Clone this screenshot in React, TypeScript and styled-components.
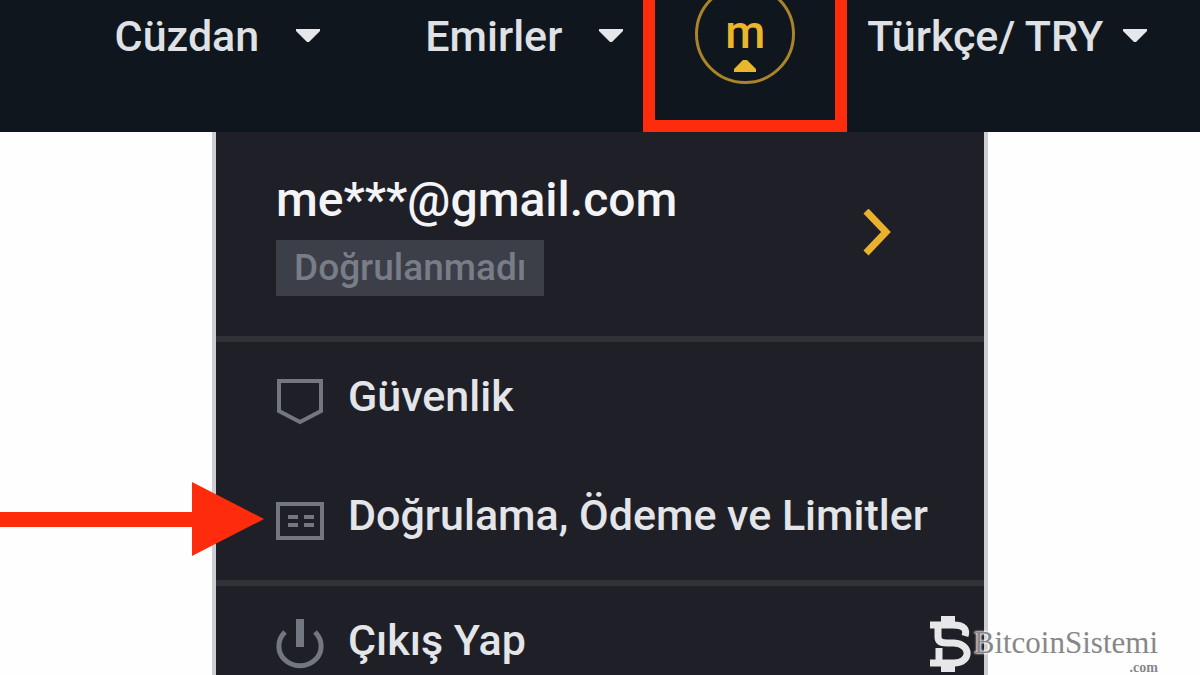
import React from "react";
import styled, { createGlobalStyle } from "styled-components";

const GlobalStyle = createGlobalStyle`
  * { box-sizing: border-box; }
  body {
    margin: 0;
    background: #fefefe;
    font-family: Roboto, "Noto Sans", sans-serif;
    font-weight: 500;
  }
  button { border: 0; padding: 0; background: none; font: inherit; color: inherit; cursor: pointer; }
  a { color: inherit; text-decoration: none; }
`;

const Page = styled.div`
  position: relative;
  height: 100vh;
  overflow: hidden;
`;

const Header = styled.header`
  display: flex;
  justify-content: center;
  height: 132px;
  padding-left: 62px;
  background: #10161d;
  color: #dfe1e5;
`;

const Nav = styled.nav`
  display: flex;
  align-items: flex-start;
  gap: 105px;
  padding-top: 12px;
`;

const NavButton = styled.button<{ $gap: number }>`
  display: flex;
  align-items: center;
  gap: ${(p) => p.$gap}px;
  height: 48px;
  font-size: 43px;
  line-height: 48px;
  white-space: nowrap;
`;

const Highlight = styled.div`
  display: flex;
  justify-content: center;
  width: 204px;
  height: 132px;
  margin: 0 20px;
  border: 12px solid #ff2b0d;
  border-top: 0;
`;

const Avatar = styled.button`
  display: flex;
  flex-direction: column;
  align-items: center;
  justify-content: flex-end;
  gap: 4px;
  width: 100px;
  height: 100px;
  margin-top: -16px;
  padding-bottom: 9px;
  border: 3px solid #a98528;
  border-radius: 50%;
  color: #eab72c;
  font-size: 46px;
  line-height: 48px;
`;

const Language = styled.div`
  padding-top: 12px;
`;

const Panel = styled.main`
  width: 776px;
  max-width: 100%;
  min-height: calc(100vh - 132px);
  margin: 0 auto;
  border: solid #cdced2;
  border-width: 0 4px;
  background: #1f2027;
  color: #e4e5e8;
`;

const Account = styled.a`
  display: flex;
  align-items: center;
  justify-content: space-between;
  height: 204px;
  padding: 0 92px 0 60px;
`;

const Identity = styled.div`
  display: flex;
  flex-direction: column;
  align-items: flex-start;
  gap: 12px;
`;

const Email = styled.span`
  color: #f4f4f6;
  font-size: 48px;
  line-height: 56px;
`;

const Badge = styled.span`
  padding: 0 18px;
  background: #3c3f48;
  color: #787d88;
  font-size: 37px;
  line-height: 56px;
`;

const Group = styled.ul`
  margin: 0;
  padding: 0;
  border-top: 6px solid #303237;
  list-style: none;
`;

const Item = styled.li`
  position: relative;
`;

const ItemLink = styled.a`
  display: flex;
  align-items: center;
  gap: 24px;
  height: 119px;
  padding: 0 60px 8px;
  font-size: 43px;
  line-height: 48px;
  white-space: nowrap;

  svg { flex: none; margin-top: 6px; }
  span { margin-bottom: 4px; }
`;

const Arrow = styled.div`
  position: absolute;
  top: 21px;
  right: calc(100% - 48px);
  display: flex;
  align-items: center;
  width: calc(50vw - 336px);
`;

const ArrowLine = styled.div`
  flex: 1;
  height: 15px;
  background: #ff2b0d;
`;

const Watermark = styled.div`
  position: absolute;
  right: 42px;
  bottom: 0;
  display: flex;
  align-items: flex-end;
  gap: 3px;

  svg { margin-bottom: 3px; }
`;

const Brand = styled.div`
  display: flex;
  flex-direction: column;
  align-items: flex-end;
  color: #87878a;
  font-family: "Liberation Serif", serif;
  font-weight: 400;
  text-shadow: 0 0 2px #fff, 0 0 2px #fff, 0 0 3px #fff;
`;

const BrandName = styled.span`
  font-size: 31px;
  line-height: 35px;
`;

const BrandSuffix = styled.span`
  font-size: 14px;
  font-weight: 700;
  line-height: 15px;
`;

const Caret = () => (
  <svg width="24" height="14" viewBox="0 0 24 14" aria-hidden="true">
    <path d="M0 0H24V2L13 13H11L0 2Z" fill="#e6e7ea" />
  </svg>
);

const ShieldIcon = () => (
  <svg width="48" height="48" viewBox="0 0 48 48" fill="none" stroke="#727782" strokeWidth="4" aria-hidden="true">
    <path d="M3 4H45V34L24 45L3 34Z" />
  </svg>
);

const CardIcon = () => (
  <svg width="48" height="48" viewBox="0 0 48 48" fill="none" stroke="#727782" strokeWidth="4" aria-hidden="true">
    <path d="M2 8H46V42H2Z" />
    <path d="M12 21H22M28 21H38M12 29H22M28 29H38" />
  </svg>
);

const PowerIcon = () => (
  <svg width="48" height="52" viewBox="0 0 48 52" fill="none" stroke="#727782" aria-hidden="true">
    <path d="M24 0V28" strokeWidth="8" />
    <path d="M9 13C0 22 2 34 8 40C17 49 31 49 40 40C46 34 48 22 39 13" strokeWidth="5" />
  </svg>
);

const BitcoinMark = () => (
  <svg width="42" height="56" viewBox="0 0 42 56" fill="none" stroke="#e7e7e9" aria-hidden="true">
    <path d="M1 9H24C36 9 38 14 36 20M9 10V21C9 25 12 27 18 27H25C43 28 42 47 25 47H1M10 32V46" strokeWidth="7" />
    <path d="M19 0V10M19 46V56" strokeWidth="14" />
  </svg>
);

export default function App() {
  return (
    <Page>
      <GlobalStyle />
      <Header>
        <Nav>
          <NavButton $gap={37}>Cüzdan <Caret /></NavButton>
          <NavButton $gap={37}>Emirler <Caret /></NavButton>
        </Nav>
        <Highlight>
          <Avatar aria-label="Hesap">
            m
            <svg width="22" height="12" viewBox="0 0 22 12" aria-hidden="true">
              <path d="M0 12V9L9 0H13L22 9V12Z" fill="#eab72c" />
            </svg>
          </Avatar>
        </Highlight>
        <Language>
          <NavButton $gap={20}>Türkçe/ TRY <Caret /></NavButton>
        </Language>
      </Header>
      <Panel>
        <Account href="#hesap">
          <Identity>
            <Email>me***@gmail.com</Email>
            <Badge>Doğrulanmadı</Badge>
          </Identity>
          <svg width="30" height="50" viewBox="0 0 30 50" fill="none" stroke="#eab22c" strokeWidth="7" aria-hidden="true">
            <path d="M4 2L24 23L4 44" />
          </svg>
        </Account>
        <Group>
          <Item>
            <ItemLink href="#guvenlik"><ShieldIcon /><span>Güvenlik</span></ItemLink>
          </Item>
          <Item>
            <ItemLink href="#dogrulama"><CardIcon /><span>Doğrulama, Ödeme ve Limitler</span></ItemLink>
            <Arrow aria-hidden="true">
              <ArrowLine />
              <svg width="72" height="74" viewBox="0 0 72 74">
                <path d="M0 0L72 37L0 74Z" fill="#ff2b0d" />
              </svg>
            </Arrow>
          </Item>
        </Group>
        <Group>
          <Item>
            <ItemLink href="#cikis"><PowerIcon /><span>Çıkış Yap</span></ItemLink>
          </Item>
        </Group>
      </Panel>
      <Watermark>
        <BitcoinMark />
        <Brand>
          <BrandName>BitcoinSistemi</BrandName>
          <BrandSuffix>.com</BrandSuffix>
        </Brand>
      </Watermark>
    </Page>
  );
}
